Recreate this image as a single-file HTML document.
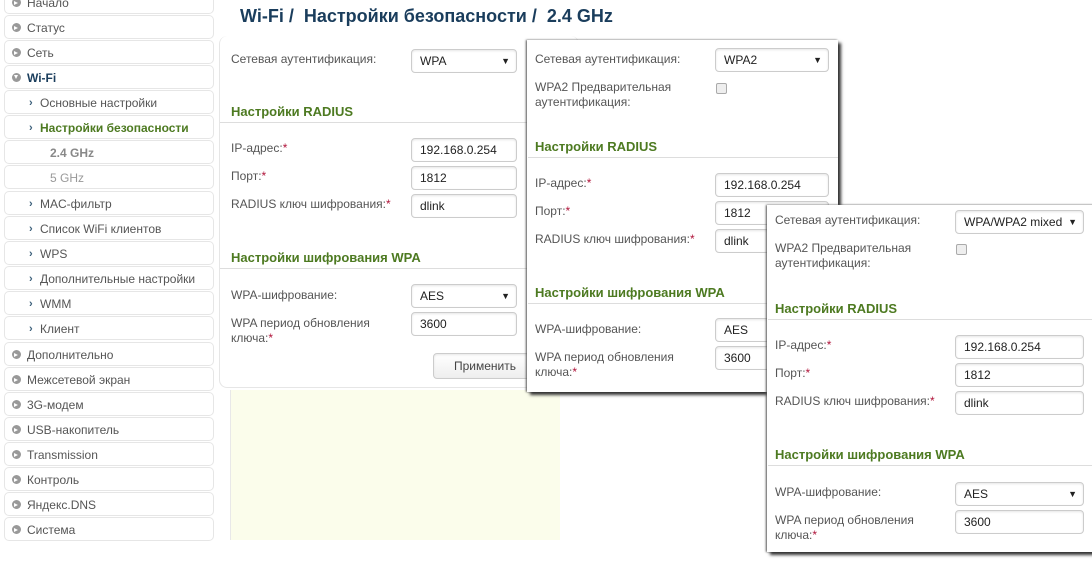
<!DOCTYPE html>
<html><head><meta charset="utf-8"><style>
*{box-sizing:border-box;margin:0;padding:0}
body{width:1092px;height:564px;overflow:hidden;background:#fff;font-family:"Liberation Sans",Arial,sans-serif;font-size:12px;color:#555;position:relative}
.a{position:absolute;white-space:nowrap}
.it{position:absolute;left:4px;width:210px;height:24px;border:1px solid #e6e6e6;border-radius:5px;background:#fff;line-height:24px;padding-left:22px;color:#555;margin-top:1px}
.it.s{padding-left:35px}
.it.s2{padding-left:45px}
.dot{position:absolute;left:7px;top:7px;width:9px;height:9px;border-radius:50%;background:#999}
.dot:after{content:"";position:absolute;left:2px;top:3px;border-left:4px solid #fff;border-top:2px solid transparent;border-bottom:2px solid transparent}
.ar{position:absolute;left:24px;top:0;font-weight:bold;color:#3b5f7a;font-size:11px}
.in{position:absolute;height:24px;border:1px solid #ccc;border-radius:4px;background:#fff;line-height:22px;padding-left:8px;color:#222;font-size:12px;box-shadow:inset 0 1px 2px #e6e6e6}
.in.sel:after{content:"▼";position:absolute;right:6px;top:0;font-size:9px;color:#222}
.h{position:absolute;font-weight:bold;font-size:13px;color:#4d7a21;white-space:nowrap}
.ln{position:absolute;height:1px;background:#ddd}
.st{color:#b0143a}
.cb{position:absolute;width:11px;height:11px;border:1px solid #aaa;border-radius:2px;background:#eee}
.ov{position:absolute;background:#fff;box-shadow:3px 3px 3px #333, -1px 0 2px #555}
</style></head><body>
<div class="it" style="top:-11px"><span class="dot"></span>Начало</div>
<div class="it" style="top:14px"><span class="dot"></span>Статус</div>
<div class="it" style="top:39px"><span class="dot"></span>Сеть</div>
<div class="it" style="top:64px;color:#1a3d5c;font-weight:bold"><span class="dot" style="transform:rotate(90deg)"></span>Wi-Fi</div>
<div class="it s" style="top:89px"><span class="ar">›</span>Основные настройки</div>
<div class="it s" style="top:114px;color:#4d7a21;font-weight:bold"><span class="ar">›</span>Настройки безопасности</div>
<div class="it s2" style="top:139px;font-weight:bold;color:#888">2.4 GHz</div>
<div class="it s2" style="top:164px;color:#999">5 GHz</div>
<div class="it s" style="top:190px"><span class="ar">›</span>MAC-фильтр</div>
<div class="it s" style="top:215px"><span class="ar">›</span>Список WiFi клиентов</div>
<div class="it s" style="top:240px"><span class="ar">›</span>WPS</div>
<div class="it s" style="top:265px"><span class="ar">›</span>Дополнительные настройки</div>
<div class="it s" style="top:290px"><span class="ar">›</span>WMM</div>
<div class="it s" style="top:315px"><span class="ar">›</span>Клиент</div>
<div class="it" style="top:341px"><span class="dot"></span>Дополнительно</div>
<div class="it" style="top:366px"><span class="dot"></span>Межсетевой экран</div>
<div class="it" style="top:391px"><span class="dot"></span>3G-модем</div>
<div class="it" style="top:416px"><span class="dot"></span>USB-накопитель</div>
<div class="it" style="top:441px"><span class="dot"></span>Transmission</div>
<div class="it" style="top:466px"><span class="dot"></span>Контроль</div>
<div class="it" style="top:491px"><span class="dot"></span>Яндекс.DNS</div>
<div class="it" style="top:516px"><span class="dot"></span>Система</div>

<div class="a" style="left:240px;top:6px;font-size:18px;font-weight:bold;color:#1a3d5c">Wi-Fi /&nbsp; Настройки безопасности /&nbsp; 2.4 GHz</div>
<div class="a" style="left:219px;top:36px;width:360px;height:352px;border:1px solid #e6e6e6;border-radius:8px;border-top:none"></div>
<div class="a" style="left:231px;top:52px">Сетевая аутентификация:</div>
<div class="in sel" style="left:411px;top:49px;width:106px">WPA</div>
<div class="h" style="left:231px;top:104px">Настройки RADIUS</div>
<div class="ln" style="left:220px;top:122px;width:310px"></div>
<div class="a" style="left:231px;top:141px">IP-адрес:<span class="st">*</span></div>
<div class="in" style="left:411px;top:138px;width:106px">192.168.0.254</div>
<div class="a" style="left:231px;top:169px">Порт:<span class="st">*</span></div>
<div class="in" style="left:411px;top:166px;width:106px">1812</div>
<div class="a" style="left:231px;top:197px">RADIUS ключ шифрования:<span class="st">*</span></div>
<div class="in" style="left:411px;top:194px;width:106px">dlink</div>
<div class="h" style="left:231px;top:250px">Настройки шифрования WPA</div>
<div class="ln" style="left:220px;top:268px;width:310px"></div>
<div class="a" style="left:231px;top:288px">WPA-шифрование:</div>
<div class="in sel" style="left:411px;top:284px;width:106px">AES</div>
<div class="a" style="left:231px;top:316px;line-height:15px">WPA период обновления<br>ключа:<span class="st">*</span></div>
<div class="in" style="left:411px;top:312px;width:106px">3600</div>
<div class="in" style="left:433px;top:353px;width:100px;height:26px;background:linear-gradient(#fff,#eee);color:#444;padding-left:20px;line-height:24px">Применить</div>
<div class="a" style="left:230px;top:390px;width:330px;height:150px;background:#fbfdeb;border-left:1px solid #e8e8e8"></div>

<div class="ov" style="left:527px;top:40px;width:311px;height:352px"></div>
<div class="a" style="left:535px;top:52px">Сетевая аутентификация:</div>
<div class="in sel" style="left:715px;top:48px;width:114px">WPA2</div>
<div class="a" style="left:535px;top:80px;line-height:15px">WPA2 Предварительная<br>аутентификация:</div>
<div class="cb" style="left:716px;top:83px"></div>
<div class="h" style="left:535px;top:139px">Настройки RADIUS</div>
<div class="ln" style="left:528px;top:157px;width:310px"></div>
<div class="a" style="left:535px;top:176px">IP-адрес:<span class="st">*</span></div>
<div class="in" style="left:715px;top:173px;width:114px">192.168.0.254</div>
<div class="a" style="left:535px;top:204px">Порт:<span class="st">*</span></div>
<div class="in" style="left:715px;top:201px;width:114px">1812</div>
<div class="a" style="left:535px;top:232px">RADIUS ключ шифрования:<span class="st">*</span></div>
<div class="in" style="left:715px;top:229px;width:114px">dlink</div>
<div class="h" style="left:535px;top:285px">Настройки шифрования WPA</div>
<div class="ln" style="left:528px;top:303px;width:310px"></div>
<div class="a" style="left:535px;top:322px">WPA-шифрование:</div>
<div class="in sel" style="left:715px;top:318px;width:114px">AES</div>
<div class="a" style="left:535px;top:350px;line-height:15px">WPA период обновления<br>ключа:<span class="st">*</span></div>
<div class="in" style="left:715px;top:346px;width:114px">3600</div>

<div class="ov" style="left:767px;top:205px;width:330px;height:347px"></div>
<div class="a" style="left:775px;top:213px">Сетевая аутентификация:</div>
<div class="in sel" style="left:955px;top:210px;width:129px">WPA/WPA2 mixed</div>
<div class="a" style="left:775px;top:241px;line-height:15px">WPA2 Предварительная<br>аутентификация:</div>
<div class="cb" style="left:956px;top:244px"></div>
<div class="h" style="left:775px;top:301px">Настройки RADIUS</div>
<div class="ln" style="left:768px;top:319px;width:324px"></div>
<div class="a" style="left:775px;top:338px">IP-адрес:<span class="st">*</span></div>
<div class="in" style="left:955px;top:335px;width:129px">192.168.0.254</div>
<div class="a" style="left:775px;top:366px">Порт:<span class="st">*</span></div>
<div class="in" style="left:955px;top:363px;width:129px">1812</div>
<div class="a" style="left:775px;top:394px">RADIUS ключ шифрования:<span class="st">*</span></div>
<div class="in" style="left:955px;top:391px;width:129px">dlink</div>
<div class="h" style="left:775px;top:447px">Настройки шифрования WPA</div>
<div class="ln" style="left:768px;top:465px;width:324px"></div>
<div class="a" style="left:775px;top:485px">WPA-шифрование:</div>
<div class="in sel" style="left:955px;top:482px;width:129px">AES</div>
<div class="a" style="left:775px;top:513px;line-height:15px">WPA период обновления<br>ключа:<span class="st">*</span></div>
<div class="in" style="left:955px;top:510px;width:129px">3600</div>
</body></html>
